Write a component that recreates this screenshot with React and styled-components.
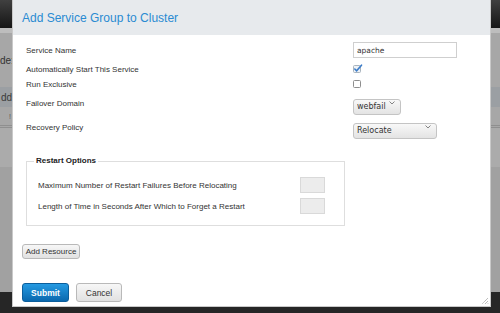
import styled, { createGlobalStyle } from 'styled-components';

const GlobalStyle = createGlobalStyle`
  html, body {
    margin: 0;
    padding: 0;
    overflow: hidden;
  }
  body {
    font-family: "Liberation Sans", Arial, sans-serif;
  }
`;

const Page = styled.div`
  position: relative;
  width: 500px;
  height: 313px;
  display: flex;
  flex-direction: column;
  background: #a7a7a7;
  overflow: hidden;
`;

const TopBar = styled.div`
  height: 28px;
  background: linear-gradient(180deg, #404040, #151515);
`;

const PageBody = styled.div`
  flex: 1;
  display: flex;
  flex-direction: column;
`;

const SubBar = styled.div`
  height: 5px;
  background: #bdbdbd;
`;

const PageText = styled.div`
  height: 54px;
  display: flex;
  align-items: center;
  font-size: 10px;
  color: #333;
`;

const PageButtonRow = styled.div`
  height: 20px;
  background: #9b9fa3;
  display: flex;
  align-items: center;
  padding-left: 1px;
  font-size: 10px;
  color: #3a3a3a;
`;

const PageRule = styled.div`
  height: 18px;
  border-bottom: 3px double #8f8f8f;
  display: flex;
  align-items: center;
  padding-left: 9px;
  font-size: 7px;
  color: #555;
`;

const PageLight = styled.div`
  height: 39px;
  background: #ababab;
`;

const PageDark = styled.div`
  flex: 1;
  background: #a1a1a1;
`;

const BottomBar = styled.div`
  height: 21px;
  background: #262626;
`;

const Modal = styled.div`
  position: absolute;
  left: 12px;
  top: -1px;
  width: 479px;
  height: 308px;
  background: #fff;
  border: 1px solid #c9c9c9;
  display: flex;
  flex-direction: column;
  box-sizing: border-box;
`;

const Header = styled.div`
  height: 35px;
  flex: none;
  background: #e7eaed;
  display: flex;
  align-items: center;
  padding-left: 9px;
  padding-top: 1px;
  box-sizing: border-box;
`;

const Title = styled.h1`
  margin: 0;
  font-size: 12px;
  font-weight: normal;
  color: #2a8bd2;
`;

const Body = styled.div`
  display: flex;
  flex-direction: column;
  padding: 7px 0 0 13px;
`;

const Row = styled.div`
  display: grid;
  grid-template-columns: 327px 1fr;
  align-items: center;
  height: ${p => p.$h}px;
  margin-top: ${p => p.$mt || 0}px;
`;

const Label = styled.span`
  font-size: 8px;
  color: #333;
`;

const TextInput = styled.input`
  width: 104px;
  height: 16px;
  box-sizing: border-box;
  border: 1px solid #cfcfcf;
  padding: 0 3px;
  font-family: "DejaVu Sans", sans-serif;
  font-size: 7.5px;
  color: #333;
  outline: none;
`;

const CheckMark = styled.svg`
  display: block;
`;

const SelectWrap = styled.div`
  position: relative;
  width: ${p => p.$w}px;
  height: 16px;
`;

const Select = styled.select`
  appearance: none;
  width: 100%;
  height: 100%;
  box-sizing: border-box;
  border: 1px solid #c4c4c4;
  border-radius: 3px;
  background: linear-gradient(180deg, #f8f8f8, #e3e3e3);
  font-family: "DejaVu Sans", sans-serif;
  font-size: 8px;
  color: #333;
  padding: 0 0 0 3px;
  outline: none;
`;

const Chevron = styled.svg`
  position: absolute;
  right: 6px;
  top: 6px;
  pointer-events: none;
`;

const Fieldset = styled.fieldset`
  width: 319px;
  box-sizing: border-box;
  margin: 20px 0 0 0;
  padding: 11px 19px 11px 11px;
  border: 1px solid #dedede;
`;

const Legend = styled.legend`
  font-size: 8px;
  font-weight: bold;
  color: #222;
  padding: 0 2px;
  margin-left: -4px;
  line-height: 10px;
`;

const OptionRow = styled.div`
  display: flex;
  align-items: center;
  justify-content: space-between;
  height: 16px;
  margin-top: ${p => p.$mt || 0}px;
`;

const OptionLabel = styled.span`
  font-size: 8px;
  color: #333;
`;

const SmallInput = styled.input`
  width: 25px;
  height: 16px;
  box-sizing: border-box;
  background: #ececec;
  border: 1px solid #d9d9d9;
  outline: none;
`;

const Button = styled.button`
  box-sizing: border-box;
  width: ${p => p.$w}px;
  height: ${p => p.$h}px;
  border-radius: 3px;
  font-family: "Liberation Sans", Arial, sans-serif;
  padding: 0;
  cursor: pointer;
  border: 1px solid ${p => (p.$primary ? '#0b5e9c' : '#b9b9b9')};
  background: ${p =>
    p.$primary
      ? 'linear-gradient(180deg, #259ae2, #0a68ae)'
      : 'linear-gradient(180deg, #f7f7f7, #e1e1e1)'};
  color: ${p => (p.$primary ? '#fff' : '#333')};
  font-weight: ${p => (p.$primary ? 'bold' : 'normal')};
  font-size: ${p => p.$fs}px;
`;

const ResourceBar = styled.div`
  margin: 14px 0 0 -4px;
`;

const Footer = styled.div`
  display: flex;
  gap: 7px;
  margin: 24px 0 0 -4px;
`;

const Grip = styled.svg`
  position: absolute;
  right: 1px;
  bottom: 1px;
`;

const App = () => {
  return (
    <>
      <GlobalStyle />
      <Page>
        <TopBar />
        <PageBody>
          <SubBar />
          <PageText>de:</PageText>
          <PageButtonRow>dd</PageButtonRow>
          <PageRule>!</PageRule>
          <PageLight />
          <PageDark />
        </PageBody>
        <BottomBar />

        <Modal>
          <Header>
            <Title>Add Service Group to Cluster</Title>
          </Header>
          <Body>
            <Row $h={16}>
              <Label>Service Name</Label>
              <TextInput defaultValue="apache" />
            </Row>
            <Row $h={18} $mt={2}>
              <Label>Automatically Start This Service</Label>
              <CheckMark width="12" height="10" viewBox="0 0 12 10">
                <rect x="0.5" y="1.5" width="7" height="7" rx="1" fill="#eef2f6" stroke="#a9b4be" />
                <path d="M1.8 5 L3.6 6.8 L8.5 1.2" fill="none" stroke="#3b7cc9" strokeWidth="1.6" strokeLinecap="round" />
              </CheckMark>
            </Row>
            <Row $h={12}>
              <Label>Run Exclusive</Label>
              <CheckMark width="12" height="10" viewBox="0 0 12 10">
                <rect x="0.5" y="1.5" width="7" height="7" rx="1" fill="#fff" stroke="#8e8e8e" />
              </CheckMark>
            </Row>
            <Row $h={18} $mt={4}>
              <Label>Failover Domain</Label>
              <SelectWrap $w={48}>
                <Select defaultValue="webfail">
                  <option>webfail</option>
                </Select>
                <Chevron width="6" height="4" viewBox="0 0 6 4">
                  <path d="M0.5 0.5 L3 3 L5.5 0.5" fill="none" stroke="#777" strokeWidth="0.9" />
                </Chevron>
              </SelectWrap>
            </Row>
            <Row $h={18} $mt={6}>
              <Label>Recovery Policy</Label>
              <SelectWrap $w={84}>
                <Select defaultValue="Relocate">
                  <option>Relocate</option>
                </Select>
                <Chevron width="6" height="4" viewBox="0 0 6 4">
                  <path d="M0.5 0.5 L3 3 L5.5 0.5" fill="none" stroke="#777" strokeWidth="0.9" />
                </Chevron>
              </SelectWrap>
            </Row>

            <Fieldset>
              <Legend>Restart Options</Legend>
              <OptionRow>
                <OptionLabel>Maximum Number of Restart Failures Before Relocating</OptionLabel>
                <SmallInput />
              </OptionRow>
              <OptionRow $mt={5}>
                <OptionLabel>Length of Time in Seconds After Which to Forget a Restart</OptionLabel>
                <SmallInput />
              </OptionRow>
            </Fieldset>

            <ResourceBar>
              <Button $w={58} $h={15} $fs={8}>Add Resource</Button>
            </ResourceBar>

            <Footer>
              <Button $primary $w={47} $h={19} $fs={8.5}>Submit</Button>
              <Button $w={46} $h={19} $fs={8.5}>Cancel</Button>
            </Footer>
          </Body>
          <Grip width="8" height="8" viewBox="0 0 8 8">
            <path d="M7 1 L1 7 M7 4 L4 7 M7 6.5 L6.5 7" stroke="#888" strokeWidth="0.8" strokeDasharray="1 0.6" />
          </Grip>
        </Modal>
      </Page>
    </>
  );
};

export default App;
